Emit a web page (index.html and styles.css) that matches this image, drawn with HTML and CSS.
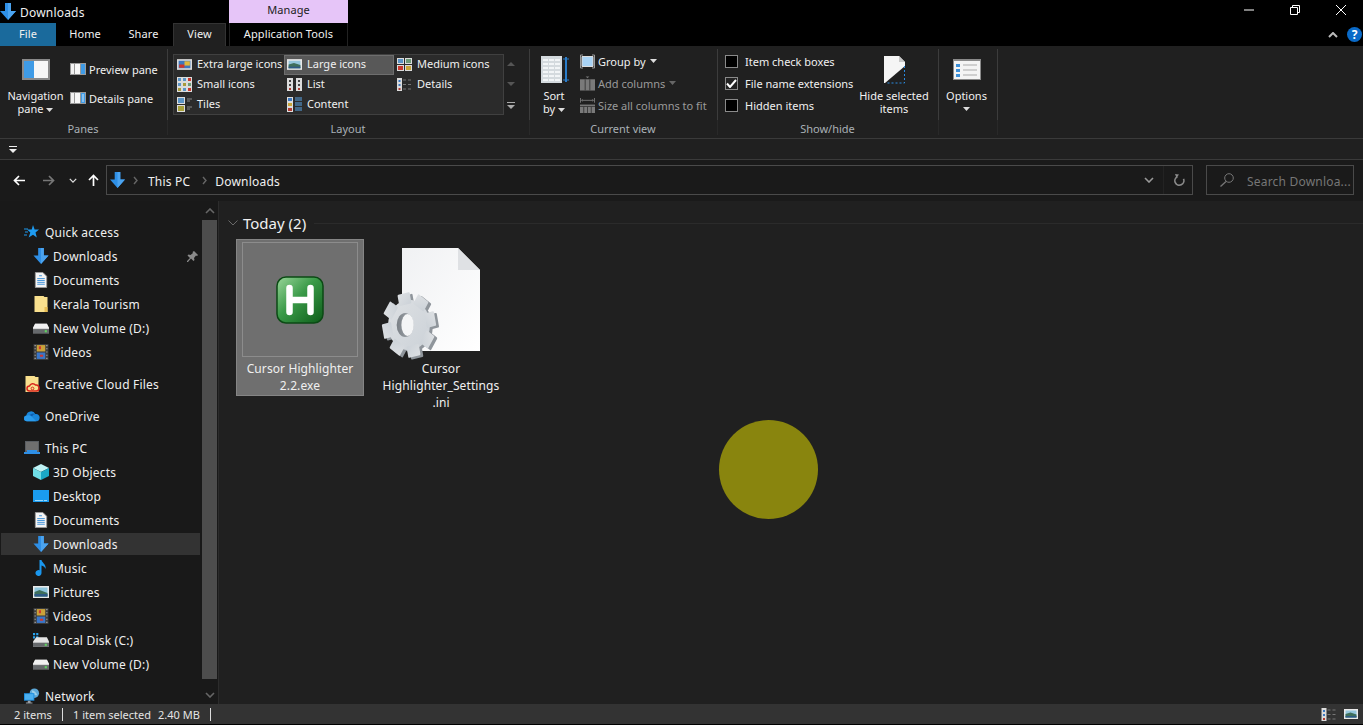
FILE: index.html
```html
<!DOCTYPE html>
<html>
	<head>
		<meta charset="UTF-8">
		<title>Downloads</title>
		<link rel="stylesheet" href="styles.css">
	</head>
	<body>
		<svg class="defs" xmlns="http://www.w3.org/2000/svg">
			<defs>
				<linearGradient id="hgreen" x1="0" y1="0" x2="1" y2="1"><stop offset="0" stop-color="#9ad69a"/><stop offset="0.45" stop-color="#3a9a48"/><stop offset="1" stop-color="#0c5c18"/></linearGradient>
				<linearGradient id="pagefill" x1="0" y1="0" x2="1" y2="1"><stop offset="0" stop-color="#f0f1f3"/><stop offset="1" stop-color="#ffffff"/></linearGradient>
				<linearGradient id="gearfill" x1="0" y1="0" x2="1" y2="1"><stop offset="0" stop-color="#dde0e3"/><stop offset="1" stop-color="#ccd2d8"/></linearGradient>
				<linearGradient id="gearhole" x1="0" y1="0" x2="1" y2="0"><stop offset="0" stop-color="#7a8086"/><stop offset="1" stop-color="#a8adb2"/></linearGradient>
				<g id="gear-shape">
					<circle r="22"/>
					<rect x="-6.500" y="-28" width="13" height="10" rx="1" transform="rotate(-12)"/>
					<rect x="-6.500" y="-28" width="13" height="10" rx="1" transform="rotate(33)"/>
					<rect x="-6.500" y="-28" width="13" height="10" rx="1" transform="rotate(78)"/>
					<rect x="-6.500" y="-28" width="13" height="10" rx="1" transform="rotate(123)"/>
					<rect x="-6.500" y="-28" width="13" height="10" rx="1" transform="rotate(168)"/>
					<rect x="-6.500" y="-28" width="13" height="10" rx="1" transform="rotate(213)"/>
					<rect x="-6.500" y="-28" width="13" height="10" rx="1" transform="rotate(258)"/>
					<rect x="-6.500" y="-28" width="13" height="10" rx="1" transform="rotate(303)"/>
				</g>
				<symbol id="i-dl" viewBox="0 0 16 17"><path d="M5 0h6v8h5l-8 9-8-9h5z" fill="#2e8fe6"/><path d="M8 0h3v8h5l-8 9z" fill="#4ba3ef"/></symbol>
				<symbol id="i-star" viewBox="0 0 16 16"><path d="M9 1l1.600 4.400H15l-3.500 3 1.300 5L9 10.700 4.700 13.500l1.600-5L3 5.500h4.700z" fill="#1e9bf0"/><path d="M0 5h4M1 8h3M0 11h3" stroke="#1e9bf0"/></symbol>
				<symbol id="i-doc" viewBox="0 0 14 17"><path d="M1 .5h8l4 4v12H1z" fill="#f4f4f4" stroke="#9a9a9a"/><path d="M3 7h8M3 9h8M3 11h8M3 13h8M5 4h3" stroke="#3c8fd8"/></symbol>
				<symbol id="i-folder" viewBox="0 0 13 16"><path d="M0 0h9l1 1h3v15H0z" fill="#f9e08e"/><path d="M10 11h3v5h-3z" fill="#e8be55"/></symbol>
				<symbol id="i-drive" viewBox="0 0 15 10"><path d="M2 1h11l2 4v5H0V5z" fill="#d6d6d6"/><path d="M2 1h11l2 4H0z" fill="#f1f1f1"/><path d="M0 6h15v4H0z" fill="#66696c"/><path d="M11 7h2v2h-2z" fill="#5fd35f"/></symbol>
				<symbol id="i-film" viewBox="0 0 14 15"><path d="M0 0h14v15H0z" fill="#3c3c3c"/><path d="M3 1h8v6H3z" fill="#caa23a"/><path d="M3 8h8v6H3z" fill="#3a76c8"/><path d="M5 2h2v3H5zM6 10h3v2H6z" fill="#d03a2f"/><path d="M1 1h1v1H1zM1 4h1v1H1zM1 7h1v1H1zM1 10h1v1H1zM1 13h1v1H1zM12 1h1v1h-1zM12 4h1v1h-1zM12 7h1v1h-1zM12 10h1v1h-1zM12 13h1v1h-1z" fill="#bbb"/></symbol>
				<symbol id="i-cc" viewBox="0 0 13 16"><path d="M0 0h9l1 1h3v15H0z" fill="#f9e08e"/><path d="M4 15a2.500 2.500 0 0 1 0-5 3.500 3.500 0 0 1 6-1 3 3 0 0 1 1 6z" fill="none" stroke="#d9261c" stroke-width="1.500"/><circle cx="7" cy="12.500" r="1.400" fill="none" stroke="#d9261c"/></symbol>
				<symbol id="i-cloud" viewBox="0 0 17 11"><path d="M3 11a3 3 0 0 1-.5-6A5 5 0 0 1 12 3.500 3.800 3.800 0 0 1 16.500 8 3 3 0 0 1 14 11z" fill="#1a86d9"/><path d="M6 4.500A5 5 0 0 1 12 3.500a4 4 0 0 0-3.500 2.500z" fill="#0f5fb0"/><path d="M3 11a3 3 0 0 1 .5-6 5 5 0 0 1 4 .500L13 11z" fill="#2a9bec"/></symbol>
				<symbol id="i-pc" viewBox="0 0 16 14"><path d="M1 0h14v11H1z" fill="#5a5e63"/><path d="M2 1h12v9H2z" fill="#6f6f6f"/><path d="M0 11h16v2H0z" fill="#2e8fe6"/><path d="M3 9h10v2H3z" fill="#2e8fe6"/></symbol>
				<symbol id="i-cube" viewBox="0 0 16 16"><path d="M8 0l8 4-8 4-8-4z" fill="#bff3f5"/><path d="M0 4l8 4v8l-8-4z" fill="#6fdde6"/><path d="M16 4l-8 4v8l8-4z" fill="#1ba8c6"/></symbol>
				<symbol id="i-desk" viewBox="0 0 16 12"><path d="M0 0h16v12H0z" fill="#1a9cf0"/><path d="M11 10h3v1h-3zM2 10h8v1H2z" fill="#9ad7fa"/></symbol>
				<symbol id="i-music" viewBox="0 0 11 16"><path d="M4 0h2c.5 3 5 4 4 9-.5-2-2-3-4-3.500V13a3 3 0 1 1-2-2.800z" fill="#1a97ee"/></symbol>
				<symbol id="i-pic" viewBox="0 0 16 12"><path d="M0 0h16v12H0z" fill="#e9e9e9"/><path d="M1.500 1.500h13v9h-13z" fill="#8fc6dd"/><path d="M1.500 6l5-2 8 3v3.500h-13z" fill="#3f6f5c"/><path d="M1.500 8h13v2.500h-13z" fill="#2e5a86"/></symbol>
				<symbol id="i-cdisk" viewBox="0 0 15 13"><path d="M0 0h2v2H0zM3 0h2v2H3zM0 3h2v2H0zM3 3h2v2H3z" fill="#29a4f0"/><path d="M3 4h10l2 4v5H0V8z" fill="#e4e4e4"/><path d="M0 9h15v4H0z" fill="#66696c"/><path d="M11 10h2v2h-2z" fill="#5fd35f"/></symbol>
				<symbol id="i-net" viewBox="0 0 17 16"><circle cx="11" cy="5" r="5" fill="#5da8d8"/><path d="M8 2c2 0 5 2 6 5-3 1-5-1-6-5z" fill="#9bd0ea"/><path d="M0 5h11v8H0z" fill="#1e8fe0"/><path d="M1 6h9v6H1z" fill="#4cb0f0"/><path d="M4 13h3v2h2v1H2v-1h2z" fill="#9a9fa5"/></symbol>
				<symbol id="i-pin" viewBox="0 0 11 11"><path d="M7 0l4 4-1 1-1-.5L7 7l.5 2-1 1-2.500-2.500L1 11H0v-1l3-3L.5 4.500l1-1 2 .5L6 2 5.500 1z" fill="#8a8a8a"/></symbol>

				<symbol id="i-navpane" viewBox="0 0 28 21"><path d="M0 0h28v21H0z" fill="#8a8a8a"/><path d="M2 2h10v17H2z" fill="#3f9be6"/><path d="M12 2h14v17H12z" fill="#f6f6f6"/></symbol>
				<symbol id="i-preview" viewBox="0 0 16 12"><path d="M0 0h16v12H0z" fill="#9a9a9a"/><path d="M1 1h3v10H1z" fill="#f1f1f1"/><path d="M5 1h5v10H5z" fill="#f7f7f7"/><path d="M11 1h4v10h-4z" fill="#3f9be6"/></symbol>
				<symbol id="i-details" viewBox="0 0 16 12"><path d="M0 0h16v12H0z" fill="#9a9a9a"/><path d="M1 1h3v10H1z" fill="#f1f1f1"/><path d="M5 1h5v10H5z" fill="#f7f7f7"/><path d="M11 1h4v10h-4z" fill="#3f9be6"/><path d="M12 3h2M12 5h2M12 7h2M12 9h2" stroke="#d4e8f8"/></symbol>
				<symbol id="i-xl" viewBox="0 0 14 12"><path d="M0 1h14v10H0z" fill="#dcdcdc"/><path d="M1.500 2.500h11v7h-11z" fill="#3c78c0"/><path d="M2 6h5v3H2z" fill="#d0352a"/><path d="M7 3h5v4H7z" fill="#e0b83a"/></symbol>
				<symbol id="i-lg" viewBox="0 0 14 12"><path d="M0 1h14v10H0z" fill="#e9e9e9"/><path d="M1.500 2.500h11v7h-11z" fill="#94c6dc"/><path d="M1.500 6l5-1.500 6 2v3h-11z" fill="#3f6f5c"/><path d="M1.500 8h11v1.500h-11z" fill="#2e5a86"/></symbol>
				<symbol id="i-md" viewBox="0 0 15 13"><path d="M0 0h7v6H0zM8 0h7v6H8zM0 7h7v6H0zM8 7h7v6H8z" fill="#dcdcdc"/><path d="M1 1h5v4H1z" fill="#5b94c6"/><path d="M9 1h5v4H9z" fill="#6d9a77"/><path d="M1 8h5v4H1z" fill="#c9392e"/><path d="M9 8h5v4H9z" fill="#c9a63a"/></symbol>
				<symbol id="i-sm" viewBox="0 0 15 15"><path d="M0 0h15v15H0z" fill="#dcdcdc"/><path d="M1 1h3v3H1zM6 1h3v3H6zM1 6h3v3H1zM6 11h3v3H6z" fill="#5b94c6"/><path d="M11 1h3v3h-3zM11 11h3v3h-3z" fill="#c9392e"/><path d="M6 6h3v3H6zM1 11h3v3H1z" fill="#a89a3a"/><path d="M11 6h3v3h-3z" fill="#6d9a77"/></symbol>
				<symbol id="i-list" viewBox="0 0 15 13"><path d="M0 0h6v13H0zM9 0h6v13H9z" fill="#dcdcdc"/><path d="M2 2h2v2H2zM11 2h2v2h-2zM2 6h2v2H2zM11 6h2v2h-2z" fill="#444"/><path d="M2 10h2v2H2zM11 10h2v2h-2z" fill="#b03a30"/></symbol>
				<symbol id="i-dtl" viewBox="0 0 15 13"><path d="M0 0h5v13H0z" fill="#dcdcdc"/><path d="M1.500 2h2v2h-2zM1.500 6h2v2h-2z" fill="#3c78c0"/><path d="M1.500 10h2v2h-2z" fill="#b03a30"/><path d="M6 2h3M11 2h3M6 6.500h3M11 6.500h3M6 11h3M11 11h3" stroke="#777"/></symbol>
				<symbol id="i-tiles" viewBox="0 0 15 15"><path d="M0 0h8v7H0zM0 8h8v7H0z" fill="#dcdcdc"/><path d="M1 1h6v5H1z" fill="#5b94c6"/><path d="M1 9h6v5H1z" fill="#a8a03a"/><path d="M10 2h5M10 4h3M10 10h5M10 12h3" stroke="#888"/></symbol>
				<symbol id="i-content" viewBox="0 0 15 15"><path d="M0 0h6v15H0z" fill="#dcdcdc"/><path d="M1 1h4v3H1z" fill="#3c78c0"/><path d="M1 6h4v3H1z" fill="#c9a63a"/><path d="M1 11h4v3H1z" fill="#b03a30"/><path d="M8 1h7M8 3h7M8 6h7M8 8h7M8 11h7M8 13h7" stroke="#5aa5e6"/></symbol>
				<symbol id="i-sort" viewBox="0 0 28 27"><path d="M0 0h21v27H0z" fill="#d4dade"/><path d="M2 3h5v2H2zM8 3h5v2H8zM14 3h5v2h-5zM2 7h5v2H2zM8 7h5v2H8zM14 7h5v2h-5zM2 11h5v2H2zM8 11h5v2H8zM14 11h5v2h-5zM2 15h5v2H2zM8 15h5v2H8zM14 15h5v2h-5zM2 19h5v2H2zM8 19h5v2H8zM14 19h5v2h-5zM2 23h5v2H2zM8 23h5v2H8zM14 23h5v2h-5z" fill="#f2f5f7"/><path d="M25 1v25" stroke="#2a7cc8" stroke-width="2"/><path d="M22 3h6M22 24h6" stroke="#2a7cc8"/></symbol>
				<symbol id="i-group" viewBox="0 0 15 14"><path d="M3 .5H.5v13H3M12 .5h2.500v13H12" fill="none" stroke="#9a9a9a"/><path d="M2 2h11v10H2z" fill="#a9d3f5" stroke="#dcdcdc"/></symbol>
				<symbol id="i-addcol" viewBox="0 0 16 15"><path d="M6 0h4l-2 2z" fill="#777"/><path d="M0 3h16v12H0z" fill="#7a7a7a"/><path d="M5 3h1v12H5zM10 3h1v12h-1z" fill="#3a3a3a"/></symbol>
				<symbol id="i-sizecol" viewBox="0 0 16 16"><path d="M.5 0v5M15.500 0v5M3 2.500h10" stroke="#777"/><path d="M3 1v3l-2-1.500zM13 1v3l2-1.500z" fill="#777"/><path d="M0 7h16v9H0z" fill="#7a7a7a"/><path d="M0 9h16M4 9v7M8 9v7M12 9v7" stroke="#3a3a3a"/></symbol>
				<symbol id="i-hide" viewBox="0 0 21 28"><path d="M0 27V0h15l6 6v4L1 27z" fill="#f5f5f5"/><path d="M15 0l6 6h-6z" fill="#c8c8c8"/><path d="M20.500 10v17H3" fill="none" stroke="#2a8ae0" stroke-dasharray="2 2"/></symbol>
				<symbol id="i-options" viewBox="0 0 28 21"><path d="M0 0h28v21H0z" fill="#8a8a8a"/><path d="M1 2h26v18H1z" fill="#f4f4f4"/><path d="M3 5h4v3H3zM3 10h4v3H3zM3 15h4v3H3z" fill="#3c8fd8"/><path d="M10 6h14M10 11h14M10 16h14" stroke="#aaa"/></symbol>
				<symbol id="i-caret" viewBox="0 0 7 4"><path d="M0 0h7L3.500 4z" fill="currentColor"/></symbol>
				<symbol id="i-chev" viewBox="0 0 10 6"><path d="M1 1l4 4 4-4" fill="none" stroke="currentColor" stroke-width="1.600"/></symbol>
				<symbol id="i-next" viewBox="0 0 5 9"><path d="M1 1l3 3.500L1 8" fill="none" stroke="currentColor" stroke-width="1.400"/></symbol>
			</defs>
		</svg>

		<div class="window">
			<div class="titlebar">
				<svg class="title-icon"><use href="#i-dl"/></svg>
				<span class="title-text">Downloads</span>
				<div class="manage">Manage</div>
				<div class="win-buttons">
					<svg class="win-btn" viewBox="0 0 10 10"><path d="M0 5h10" stroke="#fff"/></svg>
					<svg class="win-btn" viewBox="0 0 10 10"><path d="M2.500 2.500V.5h7v7h-2M.5 2.500h7v7h-7z" fill="none" stroke="#fff"/></svg>
					<svg class="win-btn" viewBox="0 0 10 10"><path d="M0 0l10 10M10 0L0 10" stroke="#fff"/></svg>
				</div>
			</div>

			<div class="tabs">
				<div class="tab tab-file">File</div>
				<div class="tab tab-home">Home</div>
				<div class="tab tab-share">Share</div>
				<div class="tab tab-view">View</div>
				<div class="tab tab-app">Application Tools</div>
				<div class="tabs-right">
					<svg class="collapse" viewBox="0 0 10 6"><path d="M1 5l4-4 4 4" fill="none" stroke="#bbb" stroke-width="2"/></svg>
					<div class="help">?</div>
				</div>
			</div>

			<div class="ribbon">
				<div class="group g-panes">
					<div class="group-body">
						<div class="big big-nav">
							<div class="big-icon"><svg class="ic28"><use href="#i-navpane"/></svg></div>
							<div class="big-text">Navigation<br>pane <svg class="caret"><use href="#i-caret"/></svg></div>
						</div>
						<div class="pane-col">
							<div class="small"><svg class="ic16"><use href="#i-preview"/></svg>Preview pane</div>
							<div class="small"><svg class="ic16"><use href="#i-details"/></svg>Details pane</div>
						</div>
					</div>
					<div class="group-label">Panes</div>
				</div>

				<div class="group g-layout">
					<div class="group-body">
						<div class="gallery">
							<div class="gal-item"><svg class="ic15"><use href="#i-xl"/></svg>Extra large icons</div>
							<div class="gal-item is-on"><svg class="ic15"><use href="#i-lg"/></svg>Large icons</div>
							<div class="gal-item"><svg class="ic15"><use href="#i-md"/></svg>Medium icons</div>
							<div class="gal-item"><svg class="ic15"><use href="#i-sm"/></svg>Small icons</div>
							<div class="gal-item"><svg class="ic15"><use href="#i-list"/></svg>List</div>
							<div class="gal-item"><svg class="ic15"><use href="#i-dtl"/></svg>Details</div>
							<div class="gal-item"><svg class="ic15"><use href="#i-tiles"/></svg>Tiles</div>
							<div class="gal-item"><svg class="ic15"><use href="#i-content"/></svg>Content</div>
						</div>
						<div class="gal-scroll">
							<svg class="gal-arrow" viewBox="0 0 8 4"><path d="M0 4l4-4 4 4z" fill="#555"/></svg>
							<svg class="gal-arrow" viewBox="0 0 8 4"><path d="M0 0l4 4 4-4z" fill="#555"/></svg>
							<svg class="gal-more" viewBox="0 0 8 7"><path d="M0 .5h8" stroke="#aaa"/><path d="M0 3l4 4 4-4z" fill="#aaa"/></svg>
						</div>
					</div>
					<div class="group-label">Layout</div>
				</div>

				<div class="group g-current">
					<div class="group-body">
						<div class="big big-sort">
							<div class="big-icon"><svg class="ic28-27"><use href="#i-sort"/></svg></div>
							<div class="big-text">Sort<br>by <svg class="caret"><use href="#i-caret"/></svg></div>
						</div>
						<div class="col-rows">
							<div class="row"><svg class="ic15"><use href="#i-group"/></svg>Group by <svg class="caret"><use href="#i-caret"/></svg></div>
							<div class="row is-off"><svg class="ic15"><use href="#i-addcol"/></svg>Add columns <svg class="caret"><use href="#i-caret"/></svg></div>
							<div class="row is-off"><svg class="ic15"><use href="#i-sizecol"/></svg>Size all columns to fit</div>
						</div>
					</div>
					<div class="group-label">Current view</div>
				</div>

				<div class="group g-show">
					<div class="group-body">
						<div class="col-rows checks">
							<label class="row"><span class="check"></span>Item check boxes</label>
							<label class="row"><span class="check is-checked"><svg viewBox="0 0 11 9"><path d="M1 4.500L4 8l6-7" fill="none" stroke="#fff" stroke-width="2"/></svg></span>File name extensions</label>
							<label class="row"><span class="check"></span>Hidden items</label>
						</div>
						<div class="big big-hide">
							<div class="big-icon"><svg class="ic21"><use href="#i-hide"/></svg></div>
							<div class="big-text">Hide selected<br>items</div>
						</div>
					</div>
					<div class="group-label">Show/hide</div>
				</div>

				<div class="group g-options">
					<div class="group-body">
						<div class="big big-options">
							<div class="big-icon"><svg class="ic28"><use href="#i-options"/></svg></div>
							<div class="big-text">Options<br><svg class="caret caret-solo"><use href="#i-caret"/></svg></div>
						</div>
					</div>
					<div class="group-label"></div>
				</div>
			</div>

			<div class="qat">
				<svg class="qat-icon" viewBox="0 0 8 7"><path d="M0 .5h8" stroke="#eee"/><path d="M0 3h8L4 7z" fill="#eee"/></svg>
			</div>

			<div class="navbar">
				<svg class="nav-arrow" viewBox="0 0 12 11"><path d="M12 5.500H2M6 1L1.500 5.500 6 10" fill="none" stroke="#fff" stroke-width="1.700"/></svg>
				<svg class="nav-arrow nav-fwd" viewBox="0 0 12 11"><path d="M0 5.500h10M6 1l4.500 4.500L6 10" fill="none" stroke="#777" stroke-width="1.700"/></svg>
				<svg class="nav-chev"><use href="#i-chev"/></svg>
				<svg class="nav-up" viewBox="0 0 11 12"><path d="M5.500 12V2M1 6l4.500-4.500L10 6" fill="none" stroke="#fff" stroke-width="1.700"/></svg>
				<div class="address">
					<svg class="addr-icon"><use href="#i-dl"/></svg>
					<svg class="crumb-sep"><use href="#i-next"/></svg>
					<span class="crumb">This PC</span>
					<svg class="crumb-sep crumb-sep2"><use href="#i-next"/></svg>
					<span class="crumb">Downloads</span>
					<svg class="addr-chev"><use href="#i-chev"/></svg>
					<span class="addr-div"></span>
					<svg class="addr-refresh" viewBox="0 0 12 13"><path d="M3 3.500a4.500 4.500 0 1 0 6.500 0" fill="none" stroke="#8a8a8a" stroke-width="1.600" transform="rotate(20 6 7)"/><path d="M2 0l4 .5-2.500 3.500z" fill="#8a8a8a"/></svg>
				</div>
				<div class="search">
					<svg class="search-icon" viewBox="0 0 14 14"><circle cx="9" cy="5" r="4.300" fill="none" stroke="#777"/><path d="M6 8.500L.5 13.500" stroke="#777" stroke-width="1.300"/></svg>
					<span class="search-text">Search Downloa...</span>
				</div>
			</div>

			<div class="main">
				<div class="sidebar">
					<div class="tree">
						<div class="node-group">
							<div class="node"><svg class="n-ic"><use href="#i-star"/></svg>Quick access</div>
							<div class="node sub"><svg class="n-ic"><use href="#i-dl"/></svg>Downloads<svg class="pin"><use href="#i-pin"/></svg></div>
							<div class="node sub"><svg class="n-ic"><use href="#i-doc"/></svg>Documents</div>
							<div class="node sub"><svg class="n-ic"><use href="#i-folder"/></svg>Kerala Tourism</div>
							<div class="node sub"><svg class="n-ic"><use href="#i-drive"/></svg>New Volume (D:)</div>
							<div class="node sub"><svg class="n-ic"><use href="#i-film"/></svg>Videos</div>
						</div>
						<div class="node-group">
							<div class="node"><svg class="n-ic"><use href="#i-cc"/></svg>Creative Cloud Files</div>
						</div>
						<div class="node-group">
							<div class="node"><svg class="n-ic"><use href="#i-cloud"/></svg>OneDrive</div>
						</div>
						<div class="node-group">
							<div class="node"><svg class="n-ic"><use href="#i-pc"/></svg>This PC</div>
							<div class="node sub"><svg class="n-ic"><use href="#i-cube"/></svg>3D Objects</div>
							<div class="node sub"><svg class="n-ic"><use href="#i-desk"/></svg>Desktop</div>
							<div class="node sub"><svg class="n-ic"><use href="#i-doc"/></svg>Documents</div>
							<div class="node sub is-sel"><svg class="n-ic"><use href="#i-dl"/></svg>Downloads</div>
							<div class="node sub"><svg class="n-ic"><use href="#i-music"/></svg>Music</div>
							<div class="node sub"><svg class="n-ic"><use href="#i-pic"/></svg>Pictures</div>
							<div class="node sub"><svg class="n-ic"><use href="#i-film"/></svg>Videos</div>
							<div class="node sub"><svg class="n-ic"><use href="#i-cdisk"/></svg>Local Disk (C:)</div>
							<div class="node sub"><svg class="n-ic"><use href="#i-drive"/></svg>New Volume (D:)</div>
						</div>
						<div class="node-group">
							<div class="node"><svg class="n-ic"><use href="#i-net"/></svg>Network</div>
						</div>
					</div>
					<div class="scrollbar">
						<svg class="sb-arrow" viewBox="0 0 10 6"><path d="M1 5l4-4 4 4" fill="none" stroke="#666" stroke-width="1.600"/></svg>
						<div class="sb-thumb"></div>
						<svg class="sb-arrow" viewBox="0 0 10 6"><path d="M1 1l4 4 4-4" fill="none" stroke="#666" stroke-width="1.600"/></svg>
					</div>
				</div>

				<div class="content">
					<div class="section-head">
						<svg class="sec-chev" viewBox="0 0 10 6"><path d="M.5 .5L5 5 9.500 .5" fill="none" stroke="#6a6a6a"/></svg>
						<span>Today (2)</span>
						<div class="sec-line"></div>
					</div>
					<div class="files">
						<div class="file is-sel">
							<div class="thumb">
								<svg class="exe" viewBox="0 0 48 48">
									<rect x="1" y="1" width="46" height="46" rx="9" fill="url(#hgreen)" stroke="#0b4a14" stroke-width="1.500"/>
									<path d="M13.500 12v24M34.500 12v24M13.500 24h21" fill="none" stroke="#fff" stroke-width="6.500" stroke-linecap="round"/>
								</svg>
							</div>
							<div class="file-name">Cursor Highlighter<br>2.2.exe</div>
						</div>
						<div class="file">
							<div class="thumb">
								<svg class="ini" viewBox="0 0 100 114">
									<path d="M22 1h56l22 22v81H22z" fill="url(#pagefill)"/>
									<path d="M78 1l22 22H78z" fill="#dfe1e4"/>
									<g transform="translate(29 78) scale(.95 1.150)">
										<use href="#gear-shape" fill="#8f959b" transform="translate(3 1.500)"/>
										<use href="#gear-shape" fill="url(#gearfill)"/>
										<ellipse cx="-4" cy="0" rx="9" ry="10.500" fill="url(#gearhole)"/>
										<ellipse cx="-1.500" cy="0" rx="6.500" ry="9.500" fill="#f4f5f6"/>
									</g>
								</svg>
							</div>
							<div class="file-name">Cursor<br>Highlighter_Settings<br>.ini</div>
						</div>
					</div>
					<div class="highlight"></div>
				</div>
			</div>

			<div class="statusbar">
				<span class="st-a">2 items</span>
				<span class="st-sep"></span>
				<span class="st-b">1 item selected</span>
				<span class="st-c">2.40 MB</span>
				<span class="st-sep"></span>
				<div class="st-views">
					<svg class="st-v1"><use href="#i-dtl"/></svg>
					<svg class="st-v2"><use href="#i-lg"/></svg>
				</div>
			</div>
		</div>
	</body>
</html>
```

FILE: styles.css
```css
html, body {
	margin: 0;
	height: 100%;
	overflow: hidden;
	background: #000;
}
body {
	font-family: "Noto Sans", "Open Sans", sans-serif;
	font-size: 12px;
	letter-spacing: 0.2px;
	color: #f0f0f0;
}
svg {
	display: block;
	flex: none;
}
.defs {
	width: 0;
	height: 0;
	position: absolute;
}
.window {
	display: flex;
	flex-direction: column;
	height: 725px;
}

/* title bar */
.titlebar {
	display: flex;
	height: 23px;
	background: #000;
	align-items: flex-start;
}
.title-icon {
	width: 16px;
	height: 17px;
	margin-top: 3px;
}
.title-text {
	width: 209px;
	margin-left: 4px;
	line-height: 26px;
}
.manage {
	width: 119px;
	height: 23px;
	line-height: 20px;
	text-align: center;
	background: #e6c5f8;
	color: #222;
	font-size: 11px;
	letter-spacing: 0.1px;
}
.win-buttons {
	display: flex;
	gap: 36px;
	margin-left: auto;
	padding: 5px 17px 0 0;
}
.win-btn {
	width: 10px;
	height: 10px;
}

/* tabs */
.tabs {
	display: flex;
	height: 23px;
	background: #000;
	line-height: 21px;
	font-size: 11px;
	letter-spacing: 0.1px;
}
.tab {
	text-align: center;
	box-sizing: border-box;
}
.tab-file {
	width: 56px;
	background: #1a6a9c;
}
.tab-home {
	width: 58px;
}
.tab-share {
	width: 59px;
}
.tab-view {
	width: 53px;
	background: #202020;
	border: 1px solid #333;
	border-bottom: 0;
	line-height: 20px;
}
.tab-app {
	width: 119px;
	margin-left: 3px;
	border-left: 1px solid #222;
	border-right: 1px solid #222;
}
.tabs-right {
	display: flex;
	align-items: center;
	gap: 9px;
	margin-left: auto;
	padding-right: 1px;
}
.collapse {
	width: 10px;
	height: 6px;
}
.help {
	width: 15px;
	height: 15px;
	border-radius: 50%;
	background: #0a6ac8;
	color: #fff;
	font-weight: 700;
	font-size: 12px;
	line-height: 15px;
	text-align: center;
	letter-spacing: 0;
}

/* ribbon */
.ribbon {
	display: flex;
	height: 93px;
	box-sizing: border-box;
	padding-top: 3px;
	background: #202020;
	border-bottom: 1px solid #3a3a3a;
	font-size: 11px;
	letter-spacing: 0;
}
.group {
	display: flex;
	flex-direction: column;
	height: 86px;
	box-sizing: border-box;
	background: linear-gradient(#3c3c3c, #3c3c3c) right top / 1px 71px no-repeat,
		linear-gradient(#292929, #292929) right bottom / 1px 15px no-repeat;
}
.group-body {
	display: flex;
	height: 74px;
}
.group-label {
	height: 12px;
	padding-right: 2px;
	line-height: 11px;
	text-align: center;
	color: #a9b0b6;
}
.g-panes {
	width: 168px;
}
.g-layout {
	width: 362px;
}
.g-current {
	width: 188px;
}
.g-show {
	width: 221px;
}
.g-options {
	width: 59px;
}
.big {
	display: flex;
	flex-direction: column;
	align-items: center;
	padding-top: 1px;
	flex: none;
}
.big-icon {
	display: flex;
	align-items: center;
	justify-content: center;
	height: 39px;
}
.big-text {
	text-align: center;
	line-height: 13px;
	white-space: nowrap;
}
.caret {
	display: inline-block;
	width: 7px;
	height: 4px;
	vertical-align: middle;
	color: #ddd;
}
.caret-solo {
	display: block;
	margin: 5px auto 0;
}
.big-nav {
	width: 71px;
	margin-right: -1px;
}
.pane-col {
	display: flex;
	flex-direction: column;
	gap: 9px;
	padding-top: 10px;
}
.small {
	display: flex;
	align-items: center;
	gap: 3px;
	height: 20px;
	white-space: nowrap;
}
.ic16 {
	width: 16px;
	height: 12px;
}
.ic15 {
	width: 15px;
	height: 15px;
}
.ic28 {
	width: 28px;
	height: 21px;
}
.ic28-27 {
	width: 28px;
	height: 27px;
	margin-left: 2px;
}
.ic21 {
	width: 21px;
	height: 28px;
}
.gallery {
	display: grid;
	grid-template-columns: 110px 110px 109px;
	grid-auto-rows: 20px;
	width: 331px;
	height: 61px;
	margin: 5px 0 0 5px;
	box-sizing: border-box;
	background: #2b2b2b;
	border: 1px solid #404040;
}
.gal-item {
	display: flex;
	align-items: center;
	gap: 5px;
	padding: 0 0 4px 3px;
	white-space: nowrap;
	box-sizing: border-box;
}
.gal-item svg {
	margin-top: 2px;
}
.gal-item.is-on {
	background: #585858;
	box-shadow: inset 0 0 0 1px #6e6e6e;
}
.gal-scroll {
	display: flex;
	flex-direction: column;
	align-items: center;
	width: 14px;
	padding-top: 13px;
	box-sizing: border-box;
}
.gal-arrow {
	width: 8px;
	height: 4px;
	margin-bottom: 16px;
}
.gal-more {
	width: 8px;
	height: 7px;
}
.big-sort {
	width: 48px;
}
.col-rows {
	display: flex;
	flex-direction: column;
	padding-top: 1px;
}
.row {
	display: flex;
	align-items: center;
	gap: 3px;
	height: 22px;
	white-space: nowrap;
}
.row .caret {
	margin-left: 1px;
}
.is-off {
	color: #9a9a9a;
}
.is-off .caret {
	color: #666;
}
.g-current .col-rows {
	padding-left: 2px;
}
.checks {
	width: 140px;
	padding-left: 7px;
	flex: none;
	box-sizing: border-box;
}
.check {
	display: block;
	flex: none;
	width: 13px;
	height: 13px;
	box-sizing: border-box;
	margin-right: 4px;
	background: #000;
	border: 1px solid #8a8a8a;
}
.check.is-checked {
	background: #222;
	padding: 1px 0 0 0;
}
.check svg {
	width: 11px;
	height: 9px;
}
.big-hide {
	width: 72px;
}
.big-options {
	width: 55px;
}

/* quick access strip */
.qat {
	height: 20px;
	box-sizing: border-box;
	padding: 7px 0 0 9px;
	background: #202020;
}
.qat-icon {
	width: 8px;
	height: 7px;
}

/* address row */
.navbar {
	display: flex;
	align-items: center;
	height: 42px;
	box-sizing: border-box;
	padding: 5px 9px 6px 13px;
	background: #1a1a1a;
	border-top: 1px solid #3a3a3a;
}
.nav-arrow {
	width: 12px;
	height: 11px;
}
.nav-fwd {
	margin-left: 18px;
}
.nav-chev {
	width: 8px;
	height: 5px;
	margin-left: 14px;
	color: #ddd;
}
.nav-up {
	width: 11px;
	height: 12px;
	margin-left: 11px;
}
.address {
	display: flex;
	align-items: center;
	width: 1087px;
	height: 30px;
	margin-left: 7px;
	box-sizing: border-box;
	padding: 0 7px 0 3px;
	border: 1px solid #4a4a4a;
}
.addr-icon {
	width: 15px;
	height: 16px;
}
.crumb {
	padding-top: 2px;
}
.crumb-sep {
	width: 5px;
	height: 9px;
	margin: 0 10px 0 8px;
	color: #666;
}
.crumb-sep2 {
	margin: 0 8px 0 12px;
}
.addr-chev {
	width: 10px;
	height: 6px;
	margin-left: auto;
	color: #999;
}
.addr-div {
	width: 1px;
	height: 28px;
	margin: 0 9px;
	background: #232323;
}
.addr-refresh {
	width: 12px;
	height: 13px;
}
.search {
	display: flex;
	align-items: center;
	width: 148px;
	height: 30px;
	margin-left: 13px;
	box-sizing: border-box;
	padding-left: 13px;
	border: 1px solid #4a4a4a;
	color: #767676;
	white-space: nowrap;
}
.search-icon {
	width: 14px;
	height: 14px;
	margin-right: 13px;
}
.search-text {
	padding-top: 3px;
}

/* main area */
.main {
	display: flex;
	height: 503px;
	overflow: hidden;
	background: #202020;
}
.sidebar {
	display: flex;
	width: 218px;
	background: #191919;
	flex: none;
	border-right: 1px solid #2c2c2c;
}
.tree {
	width: 200px;
	margin-right: 1px;
	padding: 20px 0 0 1px;
	box-sizing: border-box;
	overflow: hidden;
	flex: none;
}
.node-group {
	margin-bottom: 10px;
}
.node {
	display: flex;
	align-items: center;
	height: 22px;
	margin-bottom: 2px;
	padding-left: 44px;
	white-space: nowrap;
}
.node.sub {
	padding-left: 52px;
}
.node.is-sel {
	background: #333;
}
.n-ic {
	width: 16px;
	height: 16px;
	margin-left: -21px;
	margin-right: 5px;
}
.node.sub .n-ic {
	margin-left: -20px;
	margin-right: 4px;
}
.pin {
	width: 11px;
	height: 11px;
	margin-left: auto;
	margin-right: 2px;
}
.scrollbar {
	display: flex;
	flex-direction: column;
	align-items: center;
	width: 15px;
	margin-left: 1px;
	padding-top: 7px;
	box-sizing: border-box;
}
.sb-arrow {
	width: 10px;
	height: 6px;
}
.sb-thumb {
	width: 15px;
	height: 459px;
	margin: 6px 0 13px;
	background: #4d4d4d;
}
.content {
	position: relative;
	flex: 1;
	padding: 12px 0 0 9px;
	box-sizing: border-box;
}
.section-head {
	display: flex;
	align-items: center;
	height: 20px;
	font-size: 15px;
	letter-spacing: 0;
}
.sec-chev {
	width: 10px;
	height: 6px;
	margin-right: 5px;
}
.sec-line {
	flex: 1;
	height: 1px;
	margin-left: 8px;
	background: #2b2b2b;
}
.files {
	display: flex;
	margin: 6px 0 0 8px;
}
.file {
	width: 128px;
	height: 157px;
	box-sizing: border-box;
	padding: 2px 5px 0;
	border: 1px solid transparent;
}
.file + .file {
	margin-left: 10px;
	width: 134px;
	padding: 2px 0 0;
}
.file.is-sel {
	background: #6f6f6f;
	border-color: #858585;
}
.thumb {
	display: flex;
	align-items: center;
	justify-content: center;
	height: 115px;
	box-sizing: border-box;
}
.file.is-sel .thumb {
	border: 1px solid #8c8c8c;
}
.exe {
	width: 48px;
	height: 48px;
}
.ini {
	width: 100px;
	height: 114px;
	margin: 9px 22px 0 0;
}
.file-name {
	margin-top: 3px;
	line-height: 17px;
	text-align: center;
	white-space: nowrap;
	letter-spacing: 0.1px;
}
/* cursor highlight from the capture tool */
.highlight {
	position: absolute;
	left: 500px;
	top: 219px;
	width: 99px;
	height: 99px;
	border-radius: 50%;
	background: #89850e;
}

/* status bar */
.statusbar {
	display: flex;
	align-items: center;
	height: 20px;
	box-sizing: border-box;
	padding-left: 14px;
	background: #333;
	color: #e4e4e4;
	font-size: 11px;
	letter-spacing: 0;
}
.st-sep {
	width: 1px;
	height: 13px;
	background: #ddd;
}
.st-a {
	width: 48px;
}
.st-b {
	width: 85px;
	margin-left: 10px;
	white-space: nowrap;
}
.st-c {
	width: 52px;
}
.st-views {
	display: flex;
	align-items: center;
	gap: 7px;
	margin-left: auto;
	padding-right: 5px;
}
.st-v1 {
	width: 16px;
	height: 13px;
}
.st-v2 {
	width: 14px;
	height: 12px;
}
```
